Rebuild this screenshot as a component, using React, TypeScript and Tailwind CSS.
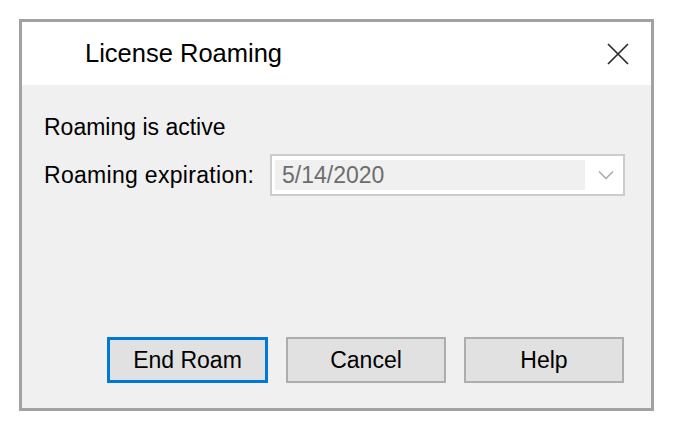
export default function App() {
  return (
    <div
      className="w-[674px] h-[425px] bg-white pt-[19px] pl-[19px]"
      style={{ fontFamily: '"Liberation Sans", Arial, sans-serif' }}
    >
      <div className="w-[635px] h-[392px] border-[3px] border-[#a2a2a2] flex flex-col bg-[#f0f0f0]">
        {/* title bar */}
        <div className="h-[63px] bg-white flex items-center justify-between pl-[63px] pr-[20px] shrink-0">
          <span className="text-[25.5px] text-black">License Roaming</span>
          <svg width="24" height="24" viewBox="0 0 24 24" className="mr-[1px]">
            <path d="M2 2 L22 22 M22 2 L2 22" stroke="#2b2b2b" strokeWidth="1.7" fill="none" />
          </svg>
        </div>

        {/* body */}
        <div className="flex-1 flex flex-col pl-[22px] pr-[27px] pt-[28px] pb-[25px] text-[23px] text-black">
          <div className="leading-[28px]">Roaming is active</div>
          <div className="flex items-center mt-[13px]">
            <span className="w-[226px] shrink-0 leading-[28px] tracking-[0.3px]">Roaming expiration:</span>
            <div className="w-[355px] h-[42px] shrink-0 border-2 border-[#cccccc] bg-white flex items-center pl-[3px] pr-[9px]">
              <div className="w-[310px] h-[30px] bg-[#f0f0f0] flex items-center pl-[7px] text-[#6d6d6d]">
                5/14/2020
              </div>
              <div className="flex-1 flex justify-end">
                <svg width="16" height="10" viewBox="0 0 16 10">
                  <path d="M1 1.5 L8 8.5 L15 1.5" stroke="#a8a8a8" strokeWidth="1.5" fill="none" />
                </svg>
              </div>
            </div>
          </div>

          <div className="mt-auto flex justify-end gap-[18px]">
            <button className="w-[161px] h-[46px] bg-[#e1e1e1] border-[3px] border-[#0078d7] text-[23px] text-black">
              End Roam
            </button>
            <button className="w-[160px] h-[46px] bg-[#e1e1e1] border-2 border-[#adadad] text-[23px] text-black">
              Cancel
            </button>
            <button className="w-[160px] h-[46px] bg-[#e1e1e1] border-2 border-[#adadad] text-[23px] text-black">
              Help
            </button>
          </div>
        </div>
      </div>
    </div>
  );
}
